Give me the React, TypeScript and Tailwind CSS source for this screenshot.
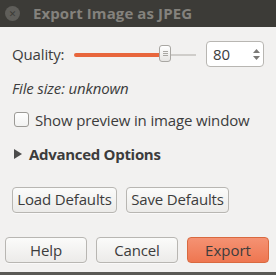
import React from "react";

const font = { fontFamily: '"Open Sans", "DejaVu Sans", sans-serif' };

function Btn({ children, className = "" }: { children: React.ReactNode; className?: string }) {
  return (
    <button
      className={`flex items-center justify-center rounded-[4px] border border-[#b8b6b2] bg-gradient-to-b from-[#fbfbfa] to-[#ecebe9] text-[15px] tracking-[-0.15px] text-[#3c3c3c] shadow-[0_1px_0_rgba(255,255,255,0.6)] ${className}`}
    >
      {children}
    </button>
  );
}

export default function App() {
  return (
    <div className="flex h-[275px] w-[276px] flex-col bg-[#f2f1f0] text-[#3c3c3c]" style={font}>
      <div className="flex h-[27px] shrink-0 items-center bg-[#3c3b37]">
        <div className="ml-[5px] flex h-[15px] w-[15px] items-center justify-center rounded-full bg-[#5f5e5a] text-[9px] leading-none text-[#3c3b37]">
          ✕
        </div>
        <div className="ml-[13px] text-[15px] font-bold leading-none tracking-[0.1px] text-[#84827d]">Export Image as JPEG</div>
      </div>
      <div className="flex flex-1 flex-col px-[12px] tracking-[-0.15px]">
        <div className="mt-[14px] flex h-[26px] items-center">
          <span className="text-[15px]">Quality:</span>
          <div className="relative ml-[10px] h-[26px] w-[122px]">
            <div className="absolute left-0 top-[12px] h-[4px] w-[90px] rounded-full bg-[#e8663c]" />
            <div className="absolute left-[90px] top-[13px] h-[2px] w-[32px] bg-[#cfcdca]" />
            <div className="absolute left-[85px] top-[4px] flex h-[17px] w-[12px] flex-col items-center justify-center gap-[1px] rounded-[3px] border border-[#a9a7a3] bg-gradient-to-b from-[#ffffff] to-[#e6e5e3]">
              <div className="h-px w-[5px] bg-[#a9a7a3]" />
              <div className="h-px w-[5px] bg-[#a9a7a3]" />
              <div className="h-px w-[5px] bg-[#a9a7a3]" />
            </div>
          </div>
          <div className="ml-auto flex h-[26px] w-[58px] items-center rounded-[4px] border border-[#b8b6b2] bg-white">
            <span className="ml-[6px] flex-1 text-[15px]">80</span>
            <div className="flex h-full w-[14px] flex-col items-center justify-center gap-[3px]">
              <svg width="7" height="4" viewBox="0 0 7 4"><path d="M0 4 L3.5 0 L7 4 Z" fill="#7a7976" /></svg>
              <svg width="7" height="4" viewBox="0 0 7 4"><path d="M0 0 L3.5 4 L7 0 Z" fill="#7a7976" /></svg>
            </div>
          </div>
        </div>
        <div className="mt-[10px] text-[15px] italic">File size: unknown</div>
        <div className="mt-[9px] flex items-center">
          <div className="ml-[2px] h-[15px] w-[15px] rounded-[3px] border border-[#9c9a96] bg-gradient-to-b from-white to-[#f2f2f1]" />
          <span className="ml-[6px] text-[15px]">Show preview in image window</span>
        </div>
        <div className="mt-[12px] flex items-center">
          <svg width="8" height="10" viewBox="0 0 8 10" className="ml-[2px]"><path d="M0 0 L8 5 L0 10 Z" fill="#4c4c4c" /></svg>
          <span className="ml-[7px] text-[15px] font-bold tracking-[-0.3px]">Advanced Options</span>
        </div>
        <div className="mt-[21px] flex gap-[9px]">
          <Btn className="h-[26px] w-[105px]">Load Defaults</Btn>
          <Btn className="h-[26px] w-[103px]">Save Defaults</Btn>
        </div>
      </div>
      <div className="flex gap-[9px] px-[5px] pb-[9px]">
        <Btn className="h-[26px] w-[82px]">Help</Btn>
        <Btn className="h-[26px] w-[82px]">Cancel</Btn>
        <button className="flex h-[26px] w-[82px] items-center justify-center rounded-[4px] border border-[#d9693f] bg-gradient-to-b from-[#f59273] to-[#ee7650] text-[15px] text-[#3c3c3c]">
          Export
        </button>
      </div>
      <div className="h-[3px] bg-[#5a5955]" />
    </div>
  );
}
